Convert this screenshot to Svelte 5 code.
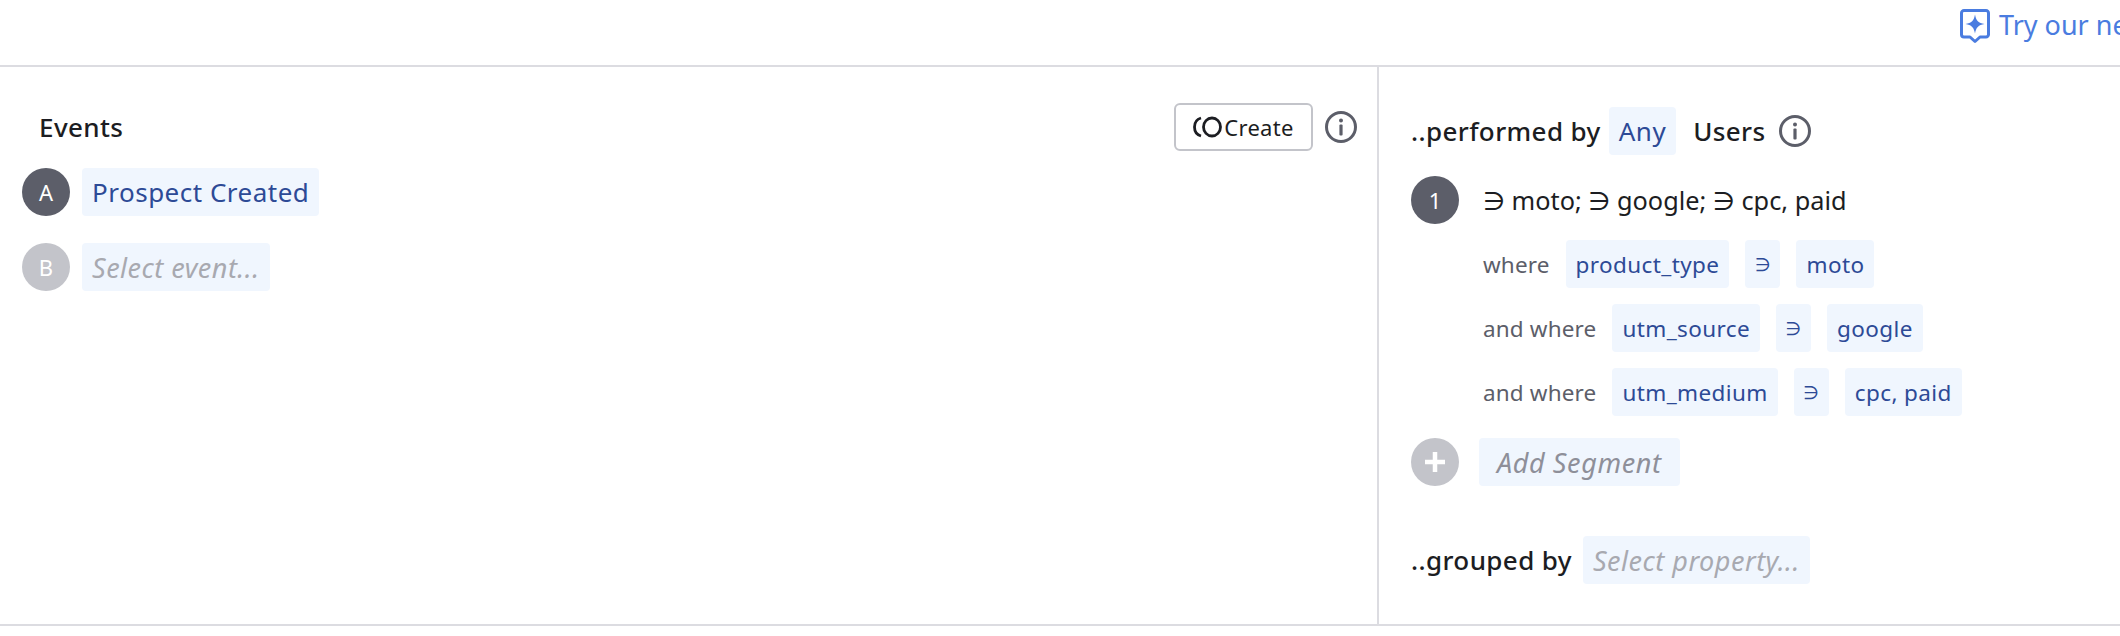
<script>
  const clauses = [
    { label: 'where', prop: 'product_type', val: 'moto' },
    { label: 'and where', prop: 'utm_source', val: 'google' },
    { label: 'and where', prop: 'utm_medium', val: 'cpc, paid' }
  ];
</script>

{#snippet info()}
  <svg class="info" viewBox="0 0 34 34" width="34" height="34" aria-hidden="true">
    <circle cx="17" cy="17" r="14.5" fill="none" stroke="#5c5e69" stroke-width="3" />
    <circle cx="17" cy="10.600" r="2" fill="#5c5e69" />
    <rect x="15.400" y="14.600" width="3.200" height="11" rx="1" fill="#5c5e69" />
  </svg>
{/snippet}

<div class="page">
  <header class="top">
    <svg class="spark" viewBox="0 0 30 35" width="30" height="35" aria-hidden="true">
      <path d="M4 1.500h22A2.500 2.500 0 0 1 28.500 4v21.500a2.500 2.500 0 0 1-2.500 2.500h-6l-5 4.500-5-4.500H4a2.500 2.500 0 0 1-2.500-2.500V4A2.500 2.500 0 0 1 4 1.500z" fill="none" stroke="#4a7ce0" stroke-width="3" stroke-linejoin="round" />
      <path d="M15 5.500c1 6 3.500 8.500 9.500 9.500-6 1-8.500 3.500-9.500 9.500-1-6-3.500-8.500-9.500-9.500 6-1 8.500-3.500 9.500-9.500z" fill="#4a7ce0" />
    </svg>
    <span class="try">Try our new Assistant</span>
  </header>

  <main class="panels">
    <section class="left">
      <div class="events-head">
        <h2 class="events-title">Events</h2>
        <button class="create">
          <svg viewBox="0 0 30 22" width="30" height="22" aria-hidden="true">
            <path d="M8 2C3 3.500 1.500 7.500 1.500 11S3 18.500 8 20" fill="none" stroke="#1c1d22" stroke-width="2.800" />
            <ellipse cx="19" cy="11" rx="8.500" ry="9" fill="none" stroke="#1c1d22" stroke-width="2.800" />
          </svg>
          <span>Create</span>
        </button>
        {@render info()}
      </div>
      <div class="row first-event">
        <span class="badge dark">A</span>
        <span class="chip large">Prospect Created</span>
      </div>
      <div class="row second-event">
        <span class="badge light">B</span>
        <span class="chip large placeholder">Select event...</span>
      </div>
    </section>

    <section class="right">
      <div class="perf">
        <span class="strong">..performed by</span>
        <span class="chip large any">Any</span>
        <span class="strong users">Users</span>
        {@render info()}
      </div>
      <div class="seg-row">
        <span class="badge dark">1</span>
        <span class="summary">∋ moto; ∋ google; ∋ cpc, paid</span>
      </div>
      <div class="clauses">
        {#each clauses as c}
          <div class="clause">
            <span class="lbl">{c.label}</span>
            <span class="chip">{c.prop}</span>
            <span class="chip op">∋</span>
            <span class="chip">{c.val}</span>
          </div>
        {/each}
      </div>
      <div class="add-row">
        <span class="badge light plus">
          <svg viewBox="0 0 22 22" width="22" height="22" aria-hidden="true">
            <path d="M11 1v20M1 11h20" stroke="#fff" stroke-width="4.500" />
          </svg>
        </span>
        <span class="chip large add">Add Segment</span>
      </div>
      <div class="grouped">
        <span class="strong">..grouped by</span>
        <span class="chip large placeholder prop">Select property...</span>
      </div>
    </section>
  </main>
</div>

<style>
  :global(body) {
    margin: 0;
    background: #fff;
  }
  .page {
    width: 2120px;
    height: 636px;
    overflow: hidden;
    font-family: "Noto Sans", "DejaVu Sans", sans-serif;
    color: #1c1d22;
  }
  .top {
    height: 65px;
    border-bottom: 2px solid #dcdce1;
    display: flex;
    align-items: flex-start;
    padding-left: 1960px;
    gap: 9px;
    overflow: hidden;
    white-space: nowrap;
  }
  .spark {
    flex: none;
    margin-top: 9px;
  }
  .try {
    font-size: 27px;
    line-height: 34px;
    margin-top: 8px;
    color: #4a7ce0;
  }
  .panels {
    display: flex;
    height: 557px;
    border-bottom: 2px solid #dcdce1;
  }
  .left {
    width: 1379px;
    flex: none;
    box-sizing: border-box;
    padding: 36px 0 0 22px;
    border-right: 2px solid #dcdce1;
  }
  .events-head {
    display: flex;
    align-items: center;
    height: 48px;
    padding-left: 17px;
    padding-right: 19px;
    margin-bottom: 17px;
  }
  .events-title {
    margin: 0;
    flex: 1;
    font-size: 26px;
    font-weight: 500;
    letter-spacing: 0.4px;
    line-height: 48px;
  }
  .create {
    height: 48px;
    width: 139px;
    box-sizing: border-box;
    background: #fff;
    border: 2px solid #c3c4ca;
    border-radius: 6px;
    font: inherit;
    font-size: 22px;
    letter-spacing: 0.3px;
    color: #1c1d22;
    display: flex;
    align-items: center;
    justify-content: center;
    gap: 1px;
    padding: 0;
    margin-right: 11px;
  }
  .info {
    flex: none;
    display: block;
  }
  .row {
    display: flex;
    align-items: center;
    gap: 12px;
  }
  .second-event {
    margin-top: 27px;
  }
  .badge {
    width: 48px;
    height: 48px;
    flex: none;
    border-radius: 50%;
    display: flex;
    align-items: center;
    justify-content: center;
    color: #fff;
    font-size: 22px;
  }
  .dark {
    background: #5c5e69;
  }
  .light {
    background: #c3c4ca;
  }
  .chip {
    display: inline-flex;
    align-items: center;
    height: 48px;
    box-sizing: border-box;
    padding: 0 10px;
    background: #f0f6fe;
    border-radius: 4px;
    color: #2d4a96;
    font-size: 22.500px;
    letter-spacing: 0.4px;
    white-space: nowrap;
  }
  .chip.large {
    font-size: 26px;
    letter-spacing: 0.5px;
  }
  .chip.placeholder {
    font-style: italic;
    font-size: 27px;
    color: #a8a9b0;
  }
  .right {
    flex: 1;
    box-sizing: border-box;
    padding: 40px 0 0 32px;
  }
  .perf {
    display: flex;
    align-items: center;
    height: 48px;
  }
  .strong {
    font-size: 26px;
    font-weight: 500;
    letter-spacing: 0.4px;
    white-space: nowrap;
  }
  .perf .any {
    margin-left: 8px;
  }
  .users {
    margin-left: 17px;
    margin-right: 12px;
  }
  .seg-row {
    display: flex;
    align-items: center;
    gap: 24px;
    margin-top: 21px;
  }
  .summary {
    font-size: 25.300px;
    color: #1c1d22;
  }
  .clauses {
    display: flex;
    flex-direction: column;
    gap: 16px;
    margin-top: 16px;
    padding-left: 72px;
  }
  .clause {
    display: flex;
    align-items: center;
    gap: 16px;
    height: 48px;
  }
  .lbl {
    font-size: 22.500px;
    letter-spacing: 0.150px;
    color: #5c5e69;
  }
  .chip.op {
    font-size: 18px;
    width: 35px;
    padding: 0;
    justify-content: center;
  }
  .add-row {
    display: flex;
    align-items: center;
    gap: 20px;
    margin-top: 22px;
  }
  .chip.add {
    font-style: italic;
    font-size: 27px;
    letter-spacing: 0.6px;
    color: #8e8f99;
    padding: 0 18px;
  }
  .grouped {
    display: flex;
    align-items: center;
    gap: 11px;
    margin-top: 50px;
  }
</style>
